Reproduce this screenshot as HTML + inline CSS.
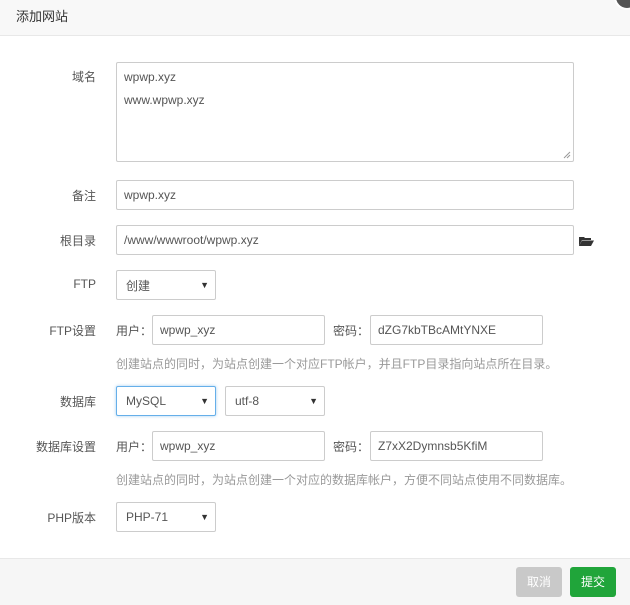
<!DOCTYPE html>
<html><head><meta charset="utf-8"><style>
*{box-sizing:border-box;margin:0;padding:0}
body{width:630px;height:605px;background:#fff;font-family:"Liberation Sans","Noto Sans CJK SC",sans-serif;font-size:12px;color:#555;position:relative;overflow:hidden}
.hd{position:absolute;left:0;top:0;width:630px;height:36px;background:#f8f8f8;border-bottom:1px solid #e8e8e8;font-size:13px;color:#333;padding:6px 0 0 16px}
.close{position:absolute;left:614px;top:-16px;width:26px;height:26px;border-radius:50%;background:#555;border:2px solid #fff}
.a{position:absolute}
.lbl{position:absolute;right:534px;text-align:right;color:#555;font-size:12px;white-space:nowrap}
.in{position:absolute;border:1px solid #ccc;border-radius:2px;background:#fff;padding:0 0 0 7px;font-size:12px;color:#555;display:flex;align-items:center}
.sel{justify-content:space-between;padding:0 6px 0 9px}
.sel i{font-style:normal;font-size:9px;color:#333}
.help{position:absolute;left:116px;color:#999;font-size:12px}
.ft{position:absolute;left:0;top:558px;width:630px;height:47px;background:#f6f6f6;border-top:1px solid #e8e8e8}
.btn{position:absolute;top:567px;width:46px;height:30px;border-radius:3px;color:#fff;font-size:12px;text-align:center;line-height:30px}
</style></head><body>
<div class="hd">添加网站</div><div class="close"></div>

<div class="lbl" style="top:68px">域名</div>
<div class="in" style="left:116px;top:62px;width:458px;height:100px;display:block;padding:3px 7px;line-height:23px">wpwp.xyz<br>www.wpwp.xyz
<svg class="a" style="right:2px;bottom:2px" width="8" height="8"><path d="M1 7L7 1M4 7L7 4" stroke="#999" stroke-width="1"/></svg></div>

<div class="lbl" style="top:187px">备注</div>
<div class="in" style="left:116px;top:180px;width:458px;height:30px">wpwp.xyz</div>

<div class="lbl" style="top:232px">根目录</div>
<div class="in" style="left:116px;top:225px;width:458px;height:30px">/www/wwwroot/wpwp.xyz</div>
<svg class="a" style="left:578px;top:235px" width="17" height="12"><path d="M1 2h5l1 1h6v2H4L1 11z" fill="#333"/><path d="M4 5.5h12l-3 5.5H1z" fill="#333"/></svg>

<div class="lbl" style="top:277px">FTP</div>
<div class="in sel" style="left:116px;top:270px;width:100px;height:30px"><span>创建</span><i>▼</i></div>

<div class="lbl" style="top:322px">FTP设置</div>
<div class="a" style="left:116px;top:322px">用户：</div>
<div class="in" style="left:152px;top:315px;width:173px;height:30px">wpwp_xyz</div>
<div class="a" style="left:333px;top:322px">密码：</div>
<div class="in" style="left:370px;top:315px;width:173px;height:30px">dZG7kbTBcAMtYNXE</div>
<div class="help" style="top:355px">创建站点的同时，为站点创建一个对应FTP帐户，并且FTP目录指向站点所在目录。</div>

<div class="lbl" style="top:393px">数据库</div>
<div class="in sel" style="left:116px;top:386px;width:100px;height:30px;border-color:#66afe9;box-shadow:0 0 3px rgba(102,175,233,.6)"><span>MySQL</span><i>▼</i></div>
<div class="in sel" style="left:225px;top:386px;width:100px;height:30px"><span>utf-8</span><i>▼</i></div>

<div class="lbl" style="top:438px">数据库设置</div>
<div class="a" style="left:116px;top:438px">用户：</div>
<div class="in" style="left:152px;top:431px;width:173px;height:30px">wpwp_xyz</div>
<div class="a" style="left:333px;top:438px">密码：</div>
<div class="in" style="left:370px;top:431px;width:173px;height:30px">Z7xX2Dymnsb5KfiM</div>
<div class="help" style="top:471px">创建站点的同时，为站点创建一个对应的数据库帐户，方便不同站点使用不同数据库。</div>

<div class="lbl" style="top:509px">PHP版本</div>
<div class="in sel" style="left:116px;top:502px;width:100px;height:30px"><span>PHP-71</span><i>▼</i></div>

<div class="ft"></div>
<div class="btn" style="left:516px;background:#c9c9c9">取消</div>
<div class="btn" style="left:570px;background:#20a53a">提交</div>
</body></html>
